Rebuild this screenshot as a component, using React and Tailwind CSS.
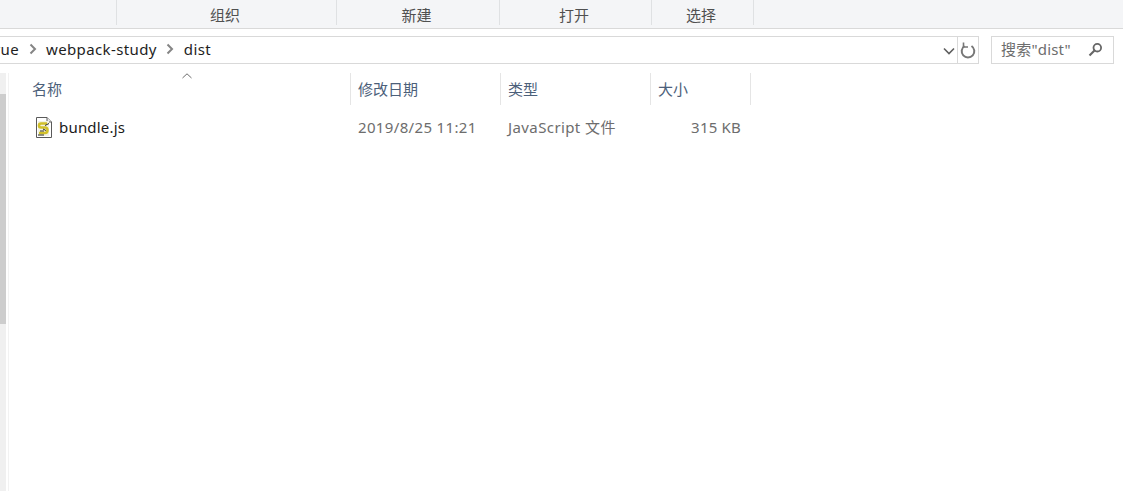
import React from "react";

const font = { fontFamily: '"Noto Sans", "Noto Sans CJK SC", sans-serif' };

function RibbonTab({ w, children }) {
  return (
    <div className={`${w} h-[25px] border-r border-[#dfe1e3] flex items-center justify-center text-[15px] text-[#505050] pt-[5px] pr-[3px]`}>
      {children}
    </div>
  );
}

function Chevron() {
  return (
    <svg width="8" height="12" viewBox="0 0 8 12" className="shrink-0">
      <path d="M1.5 1.5 L6 6 L1.5 10.5" fill="none" stroke="#858585" strokeWidth="2" />
    </svg>
  );
}

function ColHead({ w, children }) {
  return (
    <div className={`${w} h-[32px] border-r border-[#e5e5e5] flex items-center pl-[7px] pt-[1px] text-[15px] text-[#4c607a]`}>
      {children}
    </div>
  );
}

function JsIcon() {
  return (
    <svg width="18" height="21" viewBox="0 0 18 21" className="shrink-0 -ml-[1px]">
      <path d="M1.5 .5 H12 L16.5 5 V20.5 H1.5 Z" fill="#fff" stroke="#5a5a5a" />
      <path d="M12 .5 V5 H16.5" fill="#e8e8e8" stroke="#5a5a5a" />
      <rect x="3" y="4" width="11" height="15" fill="#f2f2e4" />
      <path d="M12 6.5 H6 Q4 6.5 4 8.5 Q4 10.5 6 10.5 H10 Q12.5 10.5 12.5 13 Q12.5 16 10 16 H4" fill="none" stroke="#d1c02a" strokeWidth="2.6" />
      <path d="M10 8.5 L14 6.5 M3 18 H9 M8 12 L11 13.5 M5 14 H9" fill="none" stroke="#2e2e26" strokeWidth="1" />
    </svg>
  );
}

export default function App() {
  return (
    <div className="w-[1123px] h-[491px] bg-white overflow-hidden flex flex-col" style={font}>
      <div className="h-[29px] shrink-0 bg-[#f4f5f7] border-b border-[#d9d9d9] flex pl-[116px]">
        <div className="w-px h-[25px] bg-[#dfe1e3]" />
        <RibbonTab w="w-[220px]">组织</RibbonTab>
        <RibbonTab w="w-[163px]">新建</RibbonTab>
        <RibbonTab w="w-[152px]">打开</RibbonTab>
        <RibbonTab w="w-[102px]">选择</RibbonTab>
      </div>

      <div className="mt-[7px] h-[28px] shrink-0 flex">
        <div className="w-[979px] border-y border-r border-[#d9d9d9] flex items-center text-[15px] text-[#1e1e1e] overflow-hidden tracking-[0.38px]">
          <div className="w-[957px] flex items-center h-full pb-[2px]">
            <span className="w-[19px] overflow-hidden whitespace-nowrap flex justify-end">rue</span>
            <span className="ml-[10px]"><Chevron /></span>
            <span className="ml-[9px]">webpack-study</span>
            <span className="ml-[9px]"><Chevron /></span>
            <span className="ml-[10px]">dist</span>
            <svg width="12" height="8" viewBox="0 0 12 8" className="ml-auto mr-[2px] mt-[3px]">
              <path d="M1 1.5 L6 6.5 L11 1.5" fill="none" stroke="#5f5f5f" strokeWidth="1.6" />
            </svg>
          </div>
          <div className="flex-1 h-full border-l border-[#d9d9d9] flex items-center justify-center">
            <svg width="16" height="18" viewBox="0 0 16 18">
              <path d="M4.5 5 A6.3 6.3 0 1 0 11.5 5" fill="none" stroke="#777" strokeWidth="2" />
              <path d="M3.5 1.5 V6 H8" fill="none" stroke="#777" strokeWidth="1.6" />
            </svg>
          </div>
        </div>
        <div className="ml-[12px] w-[123px] border border-[#d9d9d9] flex items-center pl-[9px] pr-[10px] pb-[1px] text-[15px] text-[#6d6d6d] tracking-[0.2px]">
          <span>搜索"dist"</span>
          <svg width="15" height="15" viewBox="0 0 15 15" className="ml-auto">
            <circle cx="9.3" cy="5.7" r="3.8" fill="none" stroke="#666" strokeWidth="1.8" />
            <path d="M6.5 8.5 L1.5 13.5" stroke="#666" strokeWidth="2.2" />
          </svg>
        </div>
      </div>

      <div className="flex-1 mt-[9px] flex min-h-0">
        <div className="w-[6px] bg-[#f0f0f0] shrink-0 pt-[21px]">
          <div className="h-[230px] bg-[#cdcdcd]" />
        </div>
        <div className="w-[2px] shrink-0" />
        <div className="w-px bg-[#f2f2f2] shrink-0" />
        <div className="flex-1 flex flex-col">
          <div className="flex relative">
            <svg width="10" height="6" viewBox="0 0 10 6" className="absolute left-[173px] top-0">
              <path d="M.5 5 L5 .8 L9.5 5" fill="none" stroke="#6d6d6d" strokeWidth="1" />
            </svg>
            <div className="w-[342px] h-[32px] border-r border-[#e5e5e5] flex items-center pl-[23px] pt-[1px] text-[15px] text-[#4c607a]">名称</div>
            <ColHead w="w-[150px]">修改日期</ColHead>
            <ColHead w="w-[150px]">类型</ColHead>
            <ColHead w="w-[100px]">大小</ColHead>
          </div>
          <div className="flex items-center h-[22px] mt-[11px] text-[15px] text-[#6d6d6d] tracking-[0.35px]">
            <div className="w-[342px] flex items-center pl-[27px] gap-[6px] text-[#1a1a1a] tracking-[0.2px]">
              <JsIcon />
              <span>bundle.js</span>
            </div>
            <div className="w-[150px] pl-[7px]">2019/8/25 11:21</div>
            <div className="w-[150px] pl-[7px] tracking-[0.4px]">JavaScript 文件</div>
            <div className="w-[90px] text-right tracking-[0.2px]">315 KB</div>
          </div>
        </div>
      </div>
    </div>
  );
}
